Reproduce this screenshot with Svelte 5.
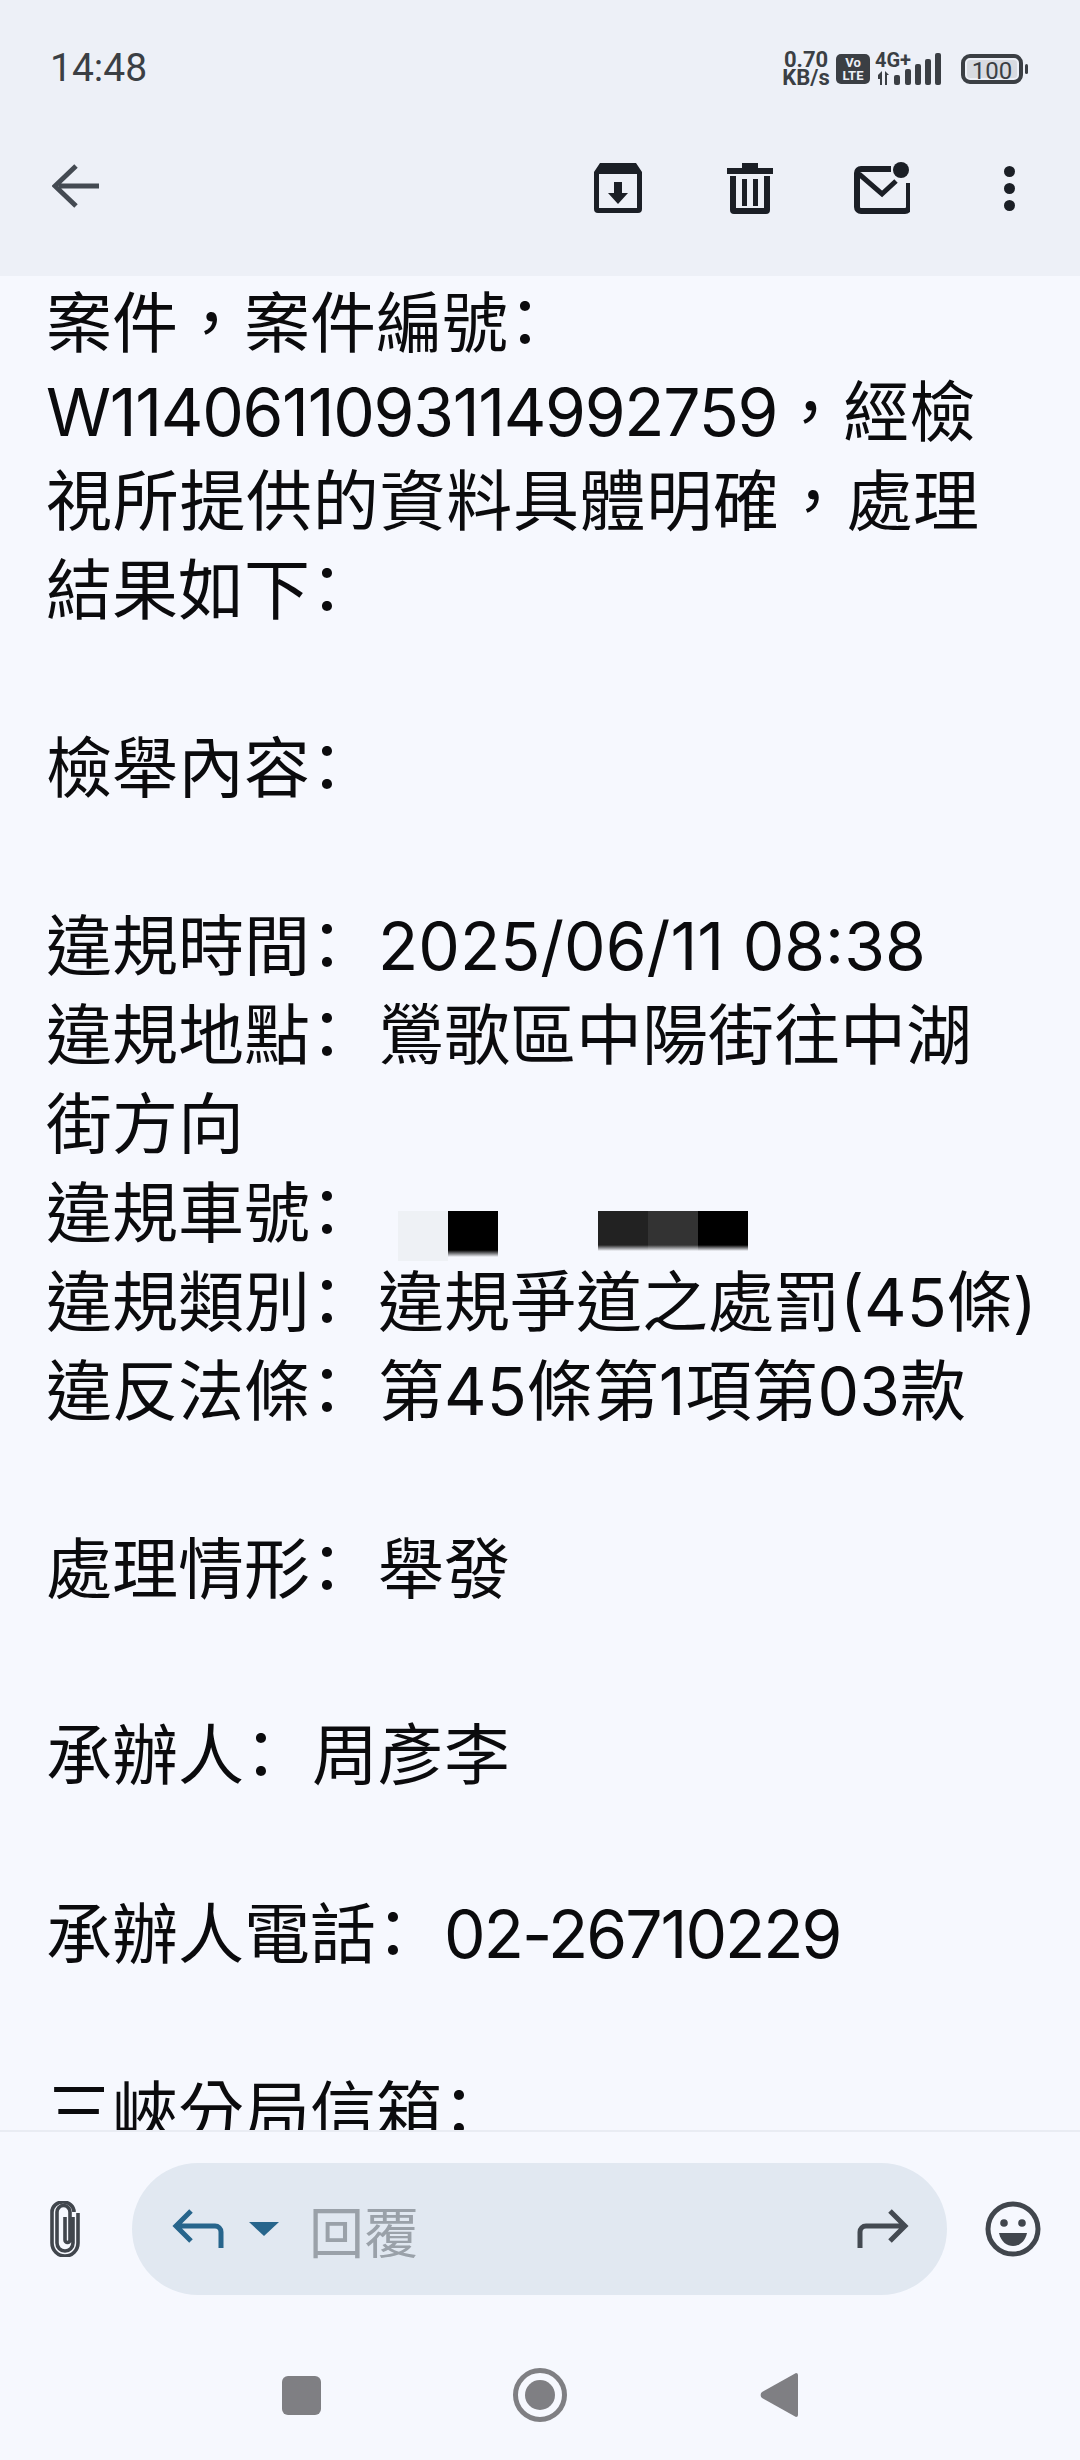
<script>
    const lines = [
        { label: "案件\uFF0C案件編號" },
        { text: "W1140611093114992759", tail: "\uFF0C經檢" },
        { text: "視所提供的資料具體明確\uFF0C處理", cls: "wide" },
        { label: "結果如下" },
        {},
        { label: "檢舉內容" },
        {},
        { label: "違規時間", value: "2025/06/11 08:38" },
        { label: "違規地點", value: "鶯歌區中陽街往中湖" },
        { text: "街方向" },
        { label: "違規車號", masked: true },
        { label: "違規類別", value: "違規爭道之處罰(45條)" },
        { label: "違反法條", value: "第45條第1項第03款" },
        {},
        { label: "處理情形", value: "舉發" },
        { cls: "gap" },
        { label: "承辦人", value: "周彥李" },
        { cls: "gap2" },
        { label: "承辦人電話", value: "02-26710229", valueCls: "tel" },
        {},
        { label: "三峽分局信箱" }
    ];
</script>

<div class="page">
    <header class="top">
        <div class="status">
            <span class="clock">14:48</span>
            <div class="sys">
                <div class="speed"><span>0.70</span><span>KB/s</span></div>
                <div class="volte"><span>Vo</span><span>LTE</span></div>
                <div class="signal">
                    <span class="net">4G+</span>
                    <svg width="72" height="32" viewBox="0 0 72 32">
                        <path d="M3 22l4-4v14H5v-6H3zM10 18l4 4h-2v10h-2z" fill="#3b3f44" />
                        <rect x="19" y="22" width="6" height="10" rx="2" fill="#3b3f44" />
                        <rect x="30" y="16" width="6" height="16" rx="2" fill="#3b3f44" />
                        <rect x="40" y="11" width="6" height="21" rx="2" fill="#3b3f44" />
                        <rect x="50" y="6" width="6" height="26" rx="2" fill="#3b3f44" />
                        <rect x="60" y="0" width="6" height="32" rx="2" fill="#3b3f44" />
                    </svg>
                </div>
                <div class="battery"><div class="level">100</div></div>
                <div class="tip"></div>
            </div>
        </div>
        <div class="toolbar">
            <svg class="back" width="48" height="48" viewBox="0 0 48 48">
                <path d="M47 22H7M24 2L3 22l21 20" fill="none" stroke="#444a52" stroke-width="5" />
            </svg>
            <div class="actions">
                <svg width="52" height="52" viewBox="0 0 52 52">
                    <path d="M8 1h36l6 9v37a4 4 0 0 1-4 4H6a4 4 0 0 1-4-4V10zM7 12v34h38V12zM10 7h32" fill="#1b1f26" fill-rule="evenodd" />
                    <path d="M22 20h8v11h6L26 42 16 31h6z" fill="#1b1f26" />
                </svg>
                <svg width="46" height="52" viewBox="0 0 46 52">
                    <path d="M15 1h16v5h15v6H0V6h15zM3 14h40v34a4 4 0 0 1-4 4H7a4 4 0 0 1-4-4zm6 0v32h28V14z" fill="#1b1f26" fill-rule="evenodd" />
                    <rect x="15" y="17" width="5" height="27" fill="#1b1f26" />
                    <rect x="26" y="17" width="5" height="27" fill="#1b1f26" />
                </svg>
                <svg width="56" height="52" viewBox="0 0 56 52">
                    <path d="M37 7H7a4 4 0 0 0-4 4v34a4 4 0 0 0 4 4h44a4 4 0 0 0 4-4V21" fill="none" stroke="#1b1f26" stroke-width="6" />
                    <path d="M5 12l23 20 14-13" fill="none" stroke="#1b1f26" stroke-width="5" />
                    <circle cx="47" cy="8" r="8" fill="#1b1f26" />
                </svg>
                <div class="dots"><i></i><i></i><i></i></div>
            </div>
        </div>
    </header>

    <main class="mail">
        {#each lines as line}
            <div class="line {line.cls ?? ''}">
                {#if line.label}
                    {line.label}<span class="colon">&#xFF1A;</span>{#if line.masked}<span class="masks"><i class="m light"></i><i class="m black tall"></i><i class="space"></i><i class="m dark"></i><i class="m darker"></i><i class="m black"></i></span>{:else if line.value}<span class={line.valueCls ?? ""}>{line.value}</span>{/if}
                {:else if line.text}
                    <span class={line.tail ? "id" : ""}>{line.text}</span>{line.tail ?? ""}
                {/if}
            </div>
        {/each}
    </main>

    <section class="composer">
        <svg width="32" height="56" viewBox="0 0 32 56">
            <path d="M24 16v26a8 8 0 0 1-16 0V11a6.500 6.500 0 0 1 13 0v28a2.500 2.500 0 0 1-5 0V16" fill="none" stroke="#41464d" stroke-width="3.600" />
            <path d="M29 12v30a13 13 0 0 1-26 0V11a11 10 0 0 1 22 0" fill="none" stroke="#41464d" stroke-width="3.600" />
        </svg>
        <div class="pill">
            <svg class="reply" width="52" height="40" viewBox="0 0 52 40">
                <path d="M49 39V23a6 6 0 0 0-6-6H5M19 2L4 17l15 15" fill="none" stroke="#27658c" stroke-width="5" />
            </svg>
            <svg class="caret" width="30" height="14" viewBox="0 0 30 14"><path d="M0 0h30L15 14z" fill="#27658c" /></svg>
            <span class="hint">回覆</span>
            <svg class="forward" width="52" height="40" viewBox="0 0 52 40">
                <path d="M3 39V23a6 6 0 0 1 6-6h38M33 2l15 15-15 15" fill="none" stroke="#444a52" stroke-width="5" />
            </svg>
        </div>
        <svg class="smile" width="56" height="56" viewBox="0 0 56 56">
            <circle cx="28" cy="28" r="25" fill="none" stroke="#41464d" stroke-width="5" />
            <circle cx="19" cy="22" r="3.800" fill="#41464d" />
            <circle cx="37" cy="22" r="3.800" fill="#41464d" />
            <path d="M14 32h28c-2 9-8 13-14 13s-12-4-14-13z" fill="#41464d" />
        </svg>
    </section>

    <nav class="nav">
        <div class="square"></div>
        <div class="home"><div></div></div>
        <svg width="38" height="46" viewBox="0 0 38 46"><path d="M36 1a2 2 0 0 1 2 2v40a2 2 0 0 1-2 2L2 26a4 4 0 0 1 0-6z" fill="#7f7f83" /></svg>
    </nav>
</div>

<style>
    :global(body) {
        margin: 0;
        background: #f6f8fe;
    }
    .page {
        width: 1080px;
        height: 2460px;
        display: flex;
        flex-direction: column;
        font-family: Inter, "Noto Sans CJK TC", sans-serif;
        overflow: hidden;
    }
    .top {
        height: 276px;
        flex: none;
        background: #edf0f7;
    }
    .status {
        height: 136px;
        box-sizing: border-box;
        padding: 46px 52px 0 50px;
        display: flex;
        justify-content: space-between;
        align-items: flex-start;
    }
    .clock {
        font: 39px/44px Roboto, sans-serif;
        color: #3b3f44;
    }
    .sys {
        display: flex;
        align-items: center;
        color: #3b3f44;
        margin-top: 5px;
    }
    .speed {
        display: flex;
        flex-direction: column;
        font: 700 22px/18px Roboto, sans-serif;
        width: 46px;
        margin-right: 7px;
        align-items: center;
    }
    .volte {
        width: 34px;
        height: 30px;
        border-radius: 5px;
        background: #3b3f44;
        color: #edf0f7;
        font: 700 13px/13px Roboto, sans-serif;
        display: flex;
        flex-direction: column;
        align-items: center;
        justify-content: center;
    }
    .signal {
        position: relative;
        width: 72px;
        height: 32px;
        margin-left: 5px;
    }
    .net {
        position: absolute;
        left: 0;
        top: -3px;
        font: 700 20px/20px Roboto, sans-serif;
    }
    .battery {
        width: 62px;
        height: 30px;
        box-sizing: border-box;
        margin-left: 14px;
        border: 4px solid #3b3f44;
        border-radius: 9px;
        padding: 2px;
    }
    .level {
        height: 100%;
        background: #d8dbe1;
        border-radius: 3px;
        font: 24px/22px Roboto, sans-serif;
        text-align: center;
    }
    .tip {
        width: 3px;
        height: 10px;
        margin-left: 2px;
        background: #3b3f44;
        border-radius: 2px;
    }
    .toolbar {
        height: 100px;
        display: flex;
        align-items: center;
        justify-content: space-between;
        padding: 0 65px 0 52px;
        margin-top: 2px;
    }
    .actions {
        display: flex;
        align-items: center;
    }
    .actions svg:nth-child(1) {
        margin-right: 83px;
    }
    .actions svg:nth-child(2) {
        margin-right: 81px;
    }
    .actions svg:nth-child(3) {
        margin-right: 94px;
    }
    .dots {
        display: flex;
        flex-direction: column;
        gap: 6px;
    }
    .dots i {
        display: block;
        width: 11px;
        height: 11px;
        border-radius: 50%;
        background: #1b1f26;
    }
    .mail {
        flex: 1;
        min-height: 0;
        overflow: hidden;
        padding: 3px 0 0 46px;
        font-size: 66px;
        color: #0b0b0d;
    }
    .line {
        height: 89px;
        line-height: 89px;
        white-space: nowrap;
    }
    .line.gap {
        height: 97px;
    }
    .line.gap2 {
        height: 90px;
    }
    .line.wide {
        letter-spacing: 0.700px;
    }
    .tel {
        letter-spacing: -2px;
    }
    .colon {
        margin: 0 18px 0 -16px;
    }
    .id {
        letter-spacing: -1.300px;
    }
    .masks {
        display: inline-flex;
        vertical-align: -24px;
        margin-left: 20px;
    }
    .masks i {
        display: block;
    }
    .m {
        width: 50px;
        height: 40px;
    }
    .light {
        height: 50px;
        background: #eef1f5;
    }
    .black {
        background: linear-gradient(#000 85%, #f6f8fe);
    }
    .m.tall {
        height: 46px;
    }
    .dark {
        background: linear-gradient(#222 85%, #f6f8fe);
    }
    .darker {
        background: linear-gradient(#333 85%, #f6f8fe);
    }
    .space {
        width: 100px;
    }
    .composer {
        flex: none;
        height: 200px;
        box-sizing: border-box;
        border-top: 2px solid #e9ecf3;
        padding: 0 39px 4px 49px;
        display: flex;
        align-items: center;
    }
    .pill {
        width: 815px;
        height: 132px;
        margin-left: 51px;
        border-radius: 66px;
        background: #e1e8f1;
        display: flex;
        align-items: center;
        padding: 0 38px 0 40px;
        box-sizing: border-box;
    }
    .smile {
        margin-left: auto;
    }
    .caret {
        margin-left: 25px;
    }
    .hint {
        margin-left: 30px;
        flex: 1;
        font-size: 55px;
        color: #9aa1a9;
    }
    .nav {
        flex: none;
        height: 130px;
        display: flex;
        align-items: center;
        justify-content: center;
    }
    .square {
        width: 39px;
        height: 39px;
        border-radius: 6px;
        background: #7f7f83;
    }
    .home {
        width: 54px;
        height: 54px;
        box-sizing: border-box;
        margin: 0 193px 0 192px;
        border: 5px solid #7f7f83;
        border-radius: 50%;
        display: flex;
        align-items: center;
        justify-content: center;
    }
    .home div {
        width: 30px;
        height: 30px;
        border-radius: 50%;
        background: #7f7f83;
    }
</style>
